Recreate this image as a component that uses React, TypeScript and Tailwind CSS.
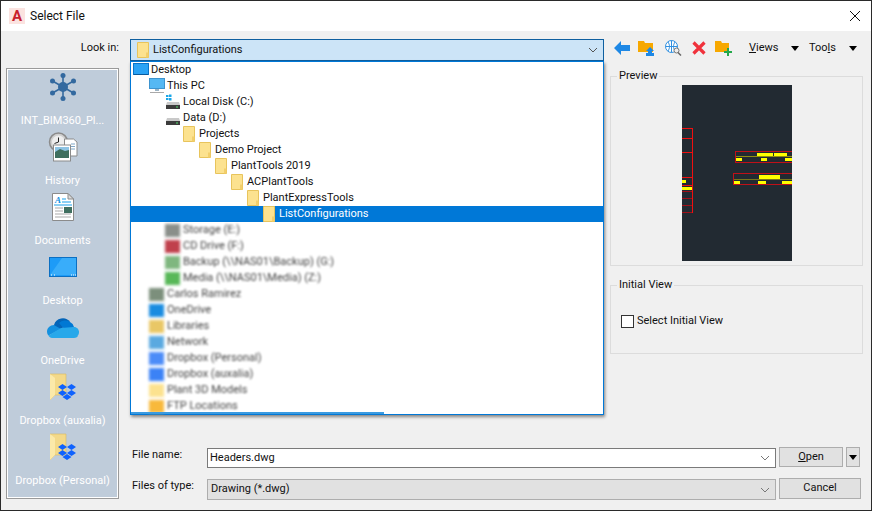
const FONT = "font-['Roboto','Liberation_Sans',sans-serif]";

function Folder({ className = "" }: { className?: string }) {
  return (
    <svg width="16" height="16" viewBox="0 0 16 16" className={`shrink-0 ${className}`}>
      <path d="M2.5 .5h11v15h-11z" fill="#fce28f" stroke="#e8c45c" />
      <path d="M11 10.5h2.5v5H11z" fill="#f2cf6b" />
    </svg>
  );
}

function Monitor({ small = false }: { small?: boolean }) {
  if (small) {
    return (
      <svg width="16" height="16" viewBox="0 0 16 16" className="shrink-0">
        <rect x="0.5" y="1.5" width="15" height="11" fill="#2aa3f5" stroke="#0a74c8" />
        <path d="M1 12h14v1H1z" fill="#0a5a9c" />
      </svg>
    );
  }
  return (
    <svg width="16" height="16" viewBox="0 0 16 16" className="shrink-0">
      <rect x="0.5" y="0.5" width="15" height="10" fill="#55b8f3" stroke="#3d94cf" />
      <path d="M6 11h4v2H6z" fill="#9db4c4" />
      <path d="M1 14h14v1H1z" fill="#a9a9a9" />
    </svg>
  );
}

function Drive({ win = false }: { win?: boolean }) {
  return (
    <svg width="16" height="16" viewBox="0 0 16 16" className="shrink-0">
      {win && <path d="M1 1h2.5v2H1zM4 .5h2.5V3H4zM1 4h2.5v2H1zM4 4h2.5v2.5H4z" fill="#19a6e8" />}
      <path d="M2 8h12l1 3H1z" fill="#c9c9c9" />
      <path d="M1 11h14v4H1z" fill="#3c3c3c" />
      <path d="M11 12.5h2v1h-2z" fill="#4ee06a" />
    </svg>
  );
}

function DropboxMark() {
  return (
    <svg width="18" height="18" viewBox="0 0 18 18" className="absolute right-0 bottom-0">
      <path d="M4.5 1 9 4 4.5 7 0 4zM13.5 1 18 4l-4.500 3L9 4zM4.5 7 9 10l-4.500 3L0 10zM13.5 7 18 10l-4.500 3L9 10zM9 11l4.500 3L9 17l-4.500-3z" fill="#0f62fe" />
    </svg>
  );
}

function DropboxFolder() {
  return (
    <div className="relative h-[28px] w-[26px]">
      <svg width="18" height="28" viewBox="0 0 18 28" className="absolute left-0 top-0">
        <path d="M0 1h16v21H5l-5 5z" fill="#f3d98a" stroke="#d9b95f" strokeWidth="0.6" />
        <path d="M0 1l5 4v17l-5 5z" fill="#fbe9a9" />
      </svg>
      <DropboxMark />
    </div>
  );
}

function PlacesIcon({ kind }: { kind: string }) {
  if (kind === "hub") {
    return (
      <svg width="30" height="30" viewBox="0 0 30 30">
        <g stroke="#33699f" strokeWidth="1.6">
          <path d="M15 3v24M4.500 9l21 12M25.500 9l-21 12" />
        </g>
        <g fill="#33699f">
          <circle cx="15" cy="15" r="5" />
          <circle cx="15" cy="3.500" r="2.500" />
          <circle cx="15" cy="26.500" r="2.500" />
          <circle cx="4.500" cy="9" r="2.500" />
          <circle cx="25.500" cy="9" r="2.500" />
          <circle cx="4.500" cy="21" r="2.500" />
          <circle cx="25.500" cy="21" r="2.500" />
        </g>
      </svg>
    );
  }
  if (kind === "history") {
    return (
      <svg width="30" height="30" viewBox="0 0 30 30">
        <circle cx="10.500" cy="10" r="9" fill="#cfcfcf" stroke="#8b8b8b" strokeWidth="1.5" />
        <circle cx="10.500" cy="10" r="6.500" fill="#eeeeee" />
        <path d="M10.500 5.500V10l-4 1.500" stroke="#222" strokeWidth="1" fill="none" />
        <path d="M16.500 7h9l3.500 3v14H16.500z" fill="#fff" stroke="#8b8b8b" />
        <path d="M23 12h4M23 14.500h4M23 17h4" stroke="#7fa7c7" />
        <rect x="5.500" y="13" width="17" height="16" fill="#fff" stroke="#8b8b8b" />
        <path d="M7 15h14v6H7z" fill="#8fc4e4" />
        <path d="M7 20l5-3 5 2 4-1v8H7z" fill="#3f6f5f" />
      </svg>
    );
  }
  if (kind === "documents") {
    return (
      <svg width="22" height="28" viewBox="0 0 22 28">
        <path d="M.5.500H16L21.500 6v21.500H.5z" fill="#fff" stroke="#8b8b8b" />
        <path d="M16 .5V6h5.500z" fill="#dcdcdc" stroke="#8b8b8b" />
        <text x="3" y="10" fontSize="9" fontWeight="700" fontStyle="italic" fill="#0f8fe0" fontFamily="Liberation Serif">A</text>
        <path d="M10 6h4M10 9h9M2 12h18" stroke="#19a0ea" />
        <path d="M3 15h8M3 18h8M3 21h16M3 24h16" stroke="#a9a9a9" />
        <path d="M12 14h8v6h-8z" fill="#3f6f5f" />
      </svg>
    );
  }
  if (kind === "desktop") {
    return (
      <svg width="28" height="20" viewBox="0 0 28 20">
        <rect x="0.500" y="0.500" width="27" height="19" fill="#1d9bf7" stroke="#0b6fc2" />
        <path d="M1 18 13 1h14v17z" fill="#39adfa" />
        <path d="M2 18h1M5 18h1M22 18h1M24 18h1M26 18h1" stroke="#fff" />
      </svg>
    );
  }
  if (kind === "onedrive") {
    return (
      <svg width="32" height="21" viewBox="0 0 32 21">
        <path d="M7 8a9 9 0 0 1 16-3l-9 7-8 1z" fill="#0364b8" />
        <path d="M12 6a9 9 0 0 1 11-1 7 7 0 0 1 4 5l-8 4z" fill="#0078d4" />
        <path d="M7 8c-4 0-7 3-7 6.500 0 1.500.5 3 1.500 4L14 12z" fill="#1490df" />
        <path d="M27 10c3 0 5 2.500 5 5 0 1.500-.5 2.500-1 3.500L19 13z" fill="#28a8ea" />
        <path d="M14 11 27 10l4 9c-1 1-2 2-4 2H5c-1.500 0-3-1-3.500-2.500z" fill="#28a8ea" />
      </svg>
    );
  }
  return <DropboxFolder />;
}

const PLACES = [
  { label: "INT_BIM360_Pl...", icon: "hub" },
  { label: "History", icon: "history" },
  { label: "Documents", icon: "documents" },
  { label: "Desktop", icon: "desktop" },
  { label: "OneDrive", icon: "onedrive" },
  { label: "Dropbox (auxalia)", icon: "dropbox" },
  { label: "Dropbox (Personal)", icon: "dropbox" },
];

const TREE = [
  { label: "Desktop", pad: "pl-[2px]", icon: <Monitor small /> },
  { label: "This PC", pad: "pl-[18px]", icon: <Monitor /> },
  { label: "Local Disk (C:)", pad: "pl-[34px]", icon: <Drive win /> },
  { label: "Data (D:)", pad: "pl-[34px]", icon: <Drive /> },
  { label: "Projects", pad: "pl-[50px]", icon: <Folder /> },
  { label: "Demo Project", pad: "pl-[66px]", icon: <Folder /> },
  { label: "PlantTools 2019", pad: "pl-[82px]", icon: <Folder /> },
  { label: "ACPlantTools", pad: "pl-[98px]", icon: <Folder /> },
  { label: "PlantExpressTools", pad: "pl-[114px]", icon: <Folder /> },
  { label: "ListConfigurations", pad: "pl-[130px]", icon: <Folder />, selected: true },
];

const BLURRED = [
  { label: "Storage (E:)", pad: "pl-[34px]", icon: "bg-[#8a8f8a]" },
  { label: "CD Drive (F:)", pad: "pl-[34px]", icon: "bg-[#c0404c]" },
  { label: "Backup (\\\\NAS01\\Backup) (G:)", pad: "pl-[34px]", icon: "bg-[#7fb77f]" },
  { label: "Media (\\\\NAS01\\Media) (Z:)", pad: "pl-[34px]", icon: "bg-[#58b858]" },
  { label: "Carlos Ramirez", pad: "pl-[18px]", icon: "bg-[#7c8f7c]" },
  { label: "OneDrive", pad: "pl-[18px]", icon: "bg-[#1a8ce0]" },
  { label: "Libraries", pad: "pl-[18px]", icon: "bg-[#e9c766]" },
  { label: "Network", pad: "pl-[18px]", icon: "bg-[#5aa9e0]" },
  { label: "Dropbox (Personal)", pad: "pl-[18px]", icon: "bg-[#4c8cf8]" },
  { label: "Dropbox (auxalia)", pad: "pl-[18px]", icon: "bg-[#3b82f6]" },
  { label: "Plant 3D Models", pad: "pl-[18px]", icon: "bg-[#fce28f]" },
  { label: "FTP Locations", pad: "pl-[18px]", icon: "bg-[#f8b93c]" },
];

function Caret() {
  return <span className="h-0 w-0 border-x-[4px] border-t-[5px] border-x-transparent border-t-black" />;
}

function Chevron({ color = "#555" }: { color?: string }) {
  return (
    <svg width="10" height="6" viewBox="0 0 10 6">
      <path d="M1 1l4 4 4-4" fill="none" stroke={color} />
    </svg>
  );
}

function PreviewDrawing() {
  const lines = [43, 53, 67, 92, 100, 106, 113, 120, 127];
  return (
    <svg width="110" height="176" viewBox="0 0 110 176" shapeRendering="crispEdges">
      <rect width="110" height="176" fill="#222a32" />
      {lines.map((y) => (
        <path key={y} d={`M0 ${y}.5h11`} stroke={y > 105 ? "#a01018" : "#f01010"} />
      ))}
      <path d="M10.500 43v85" stroke="#f01010" />
      <path d="M0 95h4v3H0zM0 102h10v3H0z" fill="#ffff00" />
      <path d="M53.500 66.500H110M53.500 77.500H110M53.500 66v12" stroke="#c01018" fill="none" />
      <path d="M75 68h16v3H75zM92 68h13v3H92zM54 73h6v3h-6zM79 73h6v3h-6zM103 73h7v3h-7z" fill="#ffff00" />
      <path d="M54 71h56v1H54z" fill="#8f8f10" />
      <path d="M51.500 88.500H110M51.500 99.500H110M51.500 88v12" stroke="#c01018" fill="none" />
      <path d="M77 90h21v4H77zM52 96h6v3h-6zM76 96h8v3h-8zM100 96h10v3h-10z" fill="#ffff00" />
      <path d="M52 94h58v1H52z" fill="#76761a" />
    </svg>
  );
}

export default function App() {
  return (
    <div className={`${FONT} relative flex h-[511px] w-[872px] flex-col overflow-hidden border border-[#2a2a2a] bg-[#f0f0f0] text-[11px] text-[#111]`}>
      {/* Title bar */}
      <div className="flex h-[30px] shrink-0 items-center bg-white pl-[8px] pr-[10px]">
        <div className="flex h-[16px] w-[16px] items-center justify-center bg-[#fbe3e0] text-[15px] font-bold leading-none text-[#c8202c]">A</div>
        <div className="ml-[5px] text-[12px]">Select File</div>
        <svg width="12" height="12" viewBox="0 0 12 12" className="ml-auto">
          <path d="M1 1l10 10M11 1 1 11" stroke="#111" />
        </svg>
      </div>

      <div className="flex min-h-0 flex-1">
        {/* Left column */}
        <div className="flex w-[118px] shrink-0 flex-col pl-[5px]">
          <div className="flex h-[37px] shrink-0 items-start justify-end pt-[9px] leading-4">Look in:</div>
          <div className="flex h-[431px] w-[113px] flex-col items-center border border-[#9a9a9a] bg-[#bfccda] text-white shadow-[inset_0_0_0_1px_#fff]">
            {PLACES.map((p) => (
              <div key={p.label} className="flex h-[60px] w-full shrink-0 flex-col items-center justify-end">
                <div className="flex h-[36px] items-center justify-center">
                  <PlacesIcon kind={p.icon} />
                </div>
                <div className="mt-[8px] whitespace-nowrap leading-4">{p.label}</div>
              </div>
            ))}
          </div>
        </div>

        {/* Main column */}
        <div className="ml-[11px] flex min-w-0 flex-1 flex-col">
          <div className="flex h-[38px] shrink-0 items-start pt-[8px]">
            <div className="flex h-[22px] w-[474px] items-center border border-[#0f5f9f] bg-[#cce4f7] pl-[4px] pr-[5px]">
              <Folder />
              <span className="ml-[2px]">ListConfigurations</span>
              <span className="ml-auto"><Chevron /></span>
            </div>
            <div className="ml-[10px] flex h-[18px] items-center">
              <svg width="16" height="14" viewBox="0 0 16 14"><path d="M0 7l7-7v4h9v6H7v4z" fill="#1e88e5" /></svg>
              <svg width="17" height="16" viewBox="0 0 17 16" className="ml-[8px]">
                <path d="M0 1h6l1 2h8v9H0z" fill="#f7a800" />
                <path d="M12 7l4 4h-2v2h2v3H8v-3h2v-2H8z" fill="#1e88e5" />
              </svg>
              <svg width="17" height="16" viewBox="0 0 17 16" className="ml-[10px]">
                <circle cx="6.500" cy="6.500" r="6" fill="#fff" stroke="#2f8fe0" />
                <path d="M.5 6.500h12M6.500.5v12M3 2c2 3 2 6 0 9M10 2c-2 3-2 6 0 9" fill="none" stroke="#2f8fe0" />
                <circle cx="11.500" cy="10.500" r="2.500" fill="#eee" stroke="#777" />
                <path d="M13 12.500l3 3" stroke="#666" strokeWidth="1.500" />
              </svg>
              <svg width="14" height="14" viewBox="0 0 14 14" className="ml-[10px]">
                <path d="M1.500 1.500l11 11M12.500 1.500l-11 11" stroke="#f0323c" strokeWidth="3.200" />
              </svg>
              <svg width="17" height="16" viewBox="0 0 17 16" className="ml-[9px]">
                <path d="M0 1h6l1 2h7v9H0z" fill="#f7a800" />
                <path d="M12 8h2v3h3v2h-3v3h-2v-3H9v-2h3z" fill="#24a84a" />
              </svg>
              <span className="ml-[17px] w-[42px]"><u>V</u>iews</span>
              <span className="flex"><Caret /></span>
              <span className="ml-[10px] w-[40px]">Too<u>l</u>s</span>
              <span className="flex"><Caret /></span>
            </div>
          </div>

          <div className="flex min-h-0 flex-1">
            <div className="w-[480px] shrink-0" />
            <div className="flex w-[253px] shrink-0 flex-col pt-[1px]">
              <fieldset className="flex h-[196px] justify-center border border-[#dcdcdc]">
                <legend className="ml-[6px] px-[2px] leading-3">Preview</legend>
                <div className="mt-[3px]"><PreviewDrawing /></div>
              </fieldset>
              <fieldset className="mt-[13px] h-[75px] border border-[#dcdcdc] pl-[10px]">
                <legend className="-ml-[4px] px-[2px] leading-3">Initial View</legend>
                <label className="mt-[22px] flex items-center">
                  <span className="h-[13px] w-[13px] border border-[#333] bg-white" />
                  <span className="ml-[3px]">Select Initial View</span>
                </label>
              </fieldset>
            </div>
          </div>

          {/* File name rows */}
          <div className="flex h-[64px] shrink-0 flex-col">
            <div className="flex h-[22px] items-start">
              <span className="mt-px w-[77px] pl-[2px] leading-4">File name:</span>
              <div className="mt-[2px] flex h-[20px] w-[569px] items-center border border-[#7a7a7a] bg-white pl-[2px] pr-[5px]">
                Headers.dwg
                <span className="ml-auto"><Chevron color="#777" /></span>
              </div>
              <div className="ml-[3px] mt-px flex h-[20px] w-[64px] items-center justify-center border border-[#adadad] bg-[#e1e1e1]"><span><u>O</u>pen</span></div>
              <div className="ml-[3px] mt-px flex h-[20px] w-[14px] items-center justify-center border border-[#adadad] bg-[#e1e1e1]"><Caret /></div>
            </div>
            <div className="mt-[10px] flex h-[22px] items-start">
              <span className="w-[77px] pl-[2px] leading-4">Files of type:</span>
              <div className="mt-px flex h-[21px] w-[569px] items-center border border-[#adadad] bg-[#e1e1e1] pl-[3px] pr-[5px]">
                Drawing (*.dwg)
                <span className="ml-auto"><Chevron color="#777" /></span>
              </div>
              <div className="ml-[3px] flex h-[21px] w-[82px] items-center justify-center border border-[#adadad] bg-[#e1e1e1]">Cancel</div>
            </div>
          </div>
        </div>
      </div>

      {/* Open Look in drop-down */}
      <div className="absolute left-[129px] top-[60px] h-[354px] w-[474px] border border-[#0078d7] bg-white shadow-[1px_2px_3px_rgba(0,0,0,0.45)]">
        {TREE.map((row) => (
          <div key={row.label} className={`flex h-4 items-center ${row.pad} ${row.selected ? "bg-[#0078d7] text-white" : ""}`}>
            {row.icon}
            <span className="ml-[2px] whitespace-nowrap">{row.label}</span>
          </div>
        ))}
        {BLURRED.map((row) => (
          <div key={row.label} className={`flex h-4 items-center ${row.pad}`}>
            <span className={`h-[13px] w-[15px] shrink-0 blur-[1.5px] ${row.icon}`} />
            <span className="ml-[3px] whitespace-nowrap text-[#444] blur-[1.2px]">{row.label}</span>
          </div>
        ))}
        <div className="absolute bottom-0 left-0 h-[2px] w-[253px] bg-[#3a9ae0]" />
      </div>
    </div>
  );
}
